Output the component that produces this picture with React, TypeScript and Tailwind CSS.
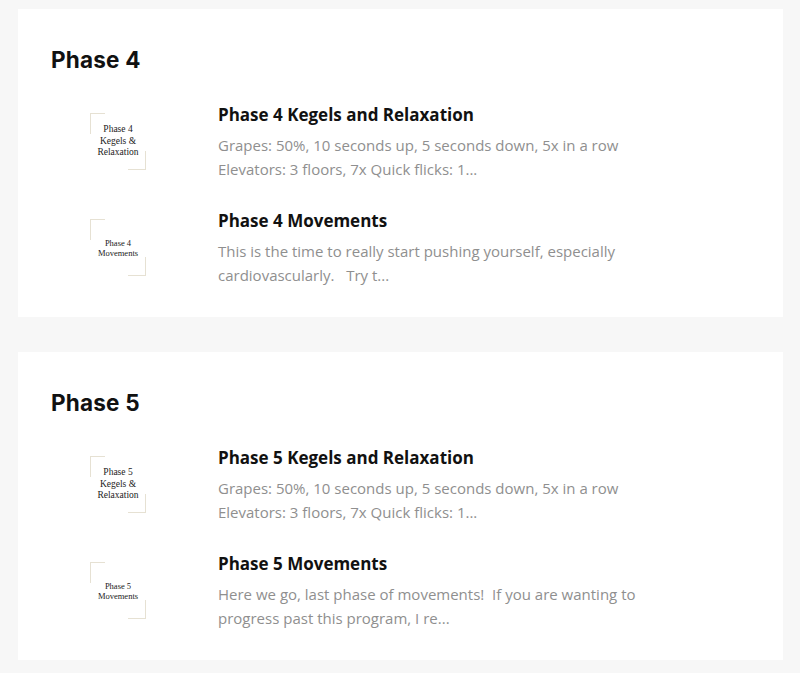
import React from 'react'

type Lesson = {
  thumb: string[]
  small?: boolean
  title: string
  desc: string[]
}

type Phase = {
  name: string
  lessons: Lesson[]
}

const phases: Phase[] = [
  {
    name: 'Phase 4',
    lessons: [
      {
        thumb: ['Phase 4', 'Kegels &', 'Relaxation'],
        title: 'Phase 4 Kegels and Relaxation',
        desc: ['Grapes: 50%, 10 seconds up, 5 seconds down, 5x in a row', 'Elevators: 3 floors, 7x Quick flicks: 1...'],
      },
      {
        thumb: ['Phase 4', 'Movements'],
        small: true,
        title: 'Phase 4 Movements',
        desc: ['This is the time to really start pushing yourself, especially', 'cardiovascularly.\u00a0\u00a0 Try t...'],
      },
    ],
  },
  {
    name: 'Phase 5',
    lessons: [
      {
        thumb: ['Phase 5', 'Kegels &', 'Relaxation'],
        title: 'Phase 5 Kegels and Relaxation',
        desc: ['Grapes: 50%, 10 seconds up, 5 seconds down, 5x in a row', 'Elevators: 3 floors, 7x Quick flicks: 1...'],
      },
      {
        thumb: ['Phase 5', 'Movements'],
        small: true,
        title: 'Phase 5 Movements',
        desc: ['Here we go, last phase of movements!\u00a0 If you are wanting to', 'progress past this program, I re...'],
      },
    ],
  },
]

function Thumb({ lines, small }: { lines: string[]; small?: boolean }) {
  return (
    <div className="w-[134px] shrink-0 flex items-center justify-center">
      <div className="relative w-[56px] h-[57px] flex items-center justify-center">
        {/* corner brackets */}
        <div className="absolute left-0 top-0 w-[15px] h-[21px] border-l-[1.5px] border-t-[1.5px] border-[#e6e1d3]" />
        <div className="absolute right-0 bottom-0 w-[18px] h-[19px] border-r-[1.5px] border-b-[1.5px] border-[#e6e1d3]" />
        <div
          className={`text-center text-[#222] font-['Liberation_Serif',serif] ${
            small ? 'text-[8.5px] leading-[10px]' : 'text-[9.5px] leading-[11.5px]'
          }`}
        >
          {lines.map((l) => (
            <div key={l} className="whitespace-nowrap">{l}</div>
          ))}
        </div>
      </div>
    </div>
  )
}

function PhaseCard({ phase }: { phase: Phase }) {
  return (
    <div className="bg-white pl-[33px] pr-6 pt-[36px] pb-[30px]">
      <h2 className="font-['Inter',sans-serif] font-bold text-[22.5px] leading-[30px] text-[#111] tracking-[0.2px]">
        {phase.name}
      </h2>
      <div className="mt-[27px] flex flex-col gap-[27px]">
        {phase.lessons.map((l) => (
          <div key={l.title} className="flex items-center gap-[33px]">
            <Thumb lines={l.thumb} small={l.small} />
            <div className="font-['Open_Sans',sans-serif]">
              <div className="text-[17px] leading-[26px] font-bold text-[#111]">{l.title}</div>
              <div className="mt-[5px] text-[15px] leading-[24px] text-[#8f8f8f]">
                {l.desc.map((d) => (
                  <div key={d} className="whitespace-pre">{d}</div>
                ))}
              </div>
            </div>
          </div>
        ))}
      </div>
    </div>
  )
}

export default function App() {
  return (
    <div className="min-h-[673px] bg-[#f7f7f7] pl-[18px] pr-[17px] pt-[9px] flex flex-col gap-[35px]">
      {phases.map((p) => (
        <PhaseCard key={p.name} phase={p} />
      ))}
    </div>
  )
}
